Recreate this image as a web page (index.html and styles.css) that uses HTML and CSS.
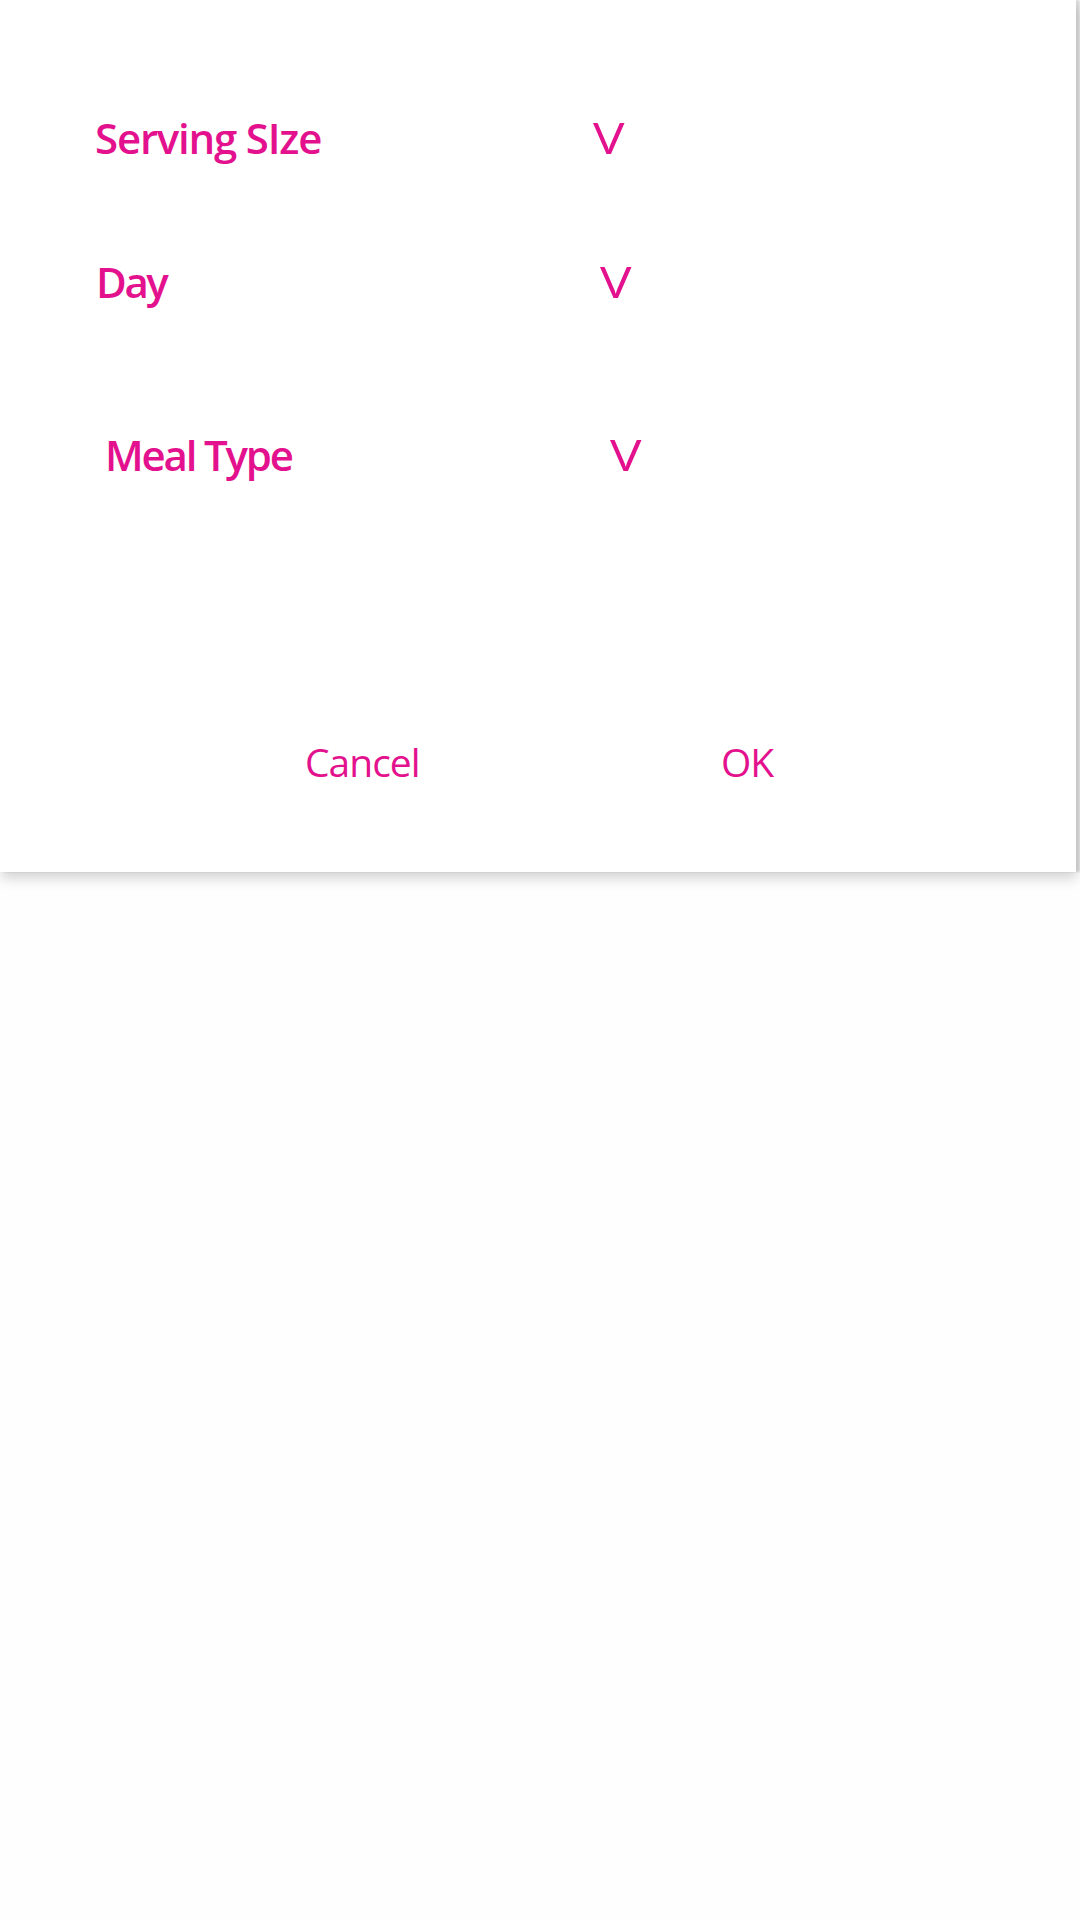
FILE: index.html
```html
<!DOCTYPE html>
<html lang="en">
<head>
<meta charset="utf-8">
<title>Add Meal</title>
<link rel="stylesheet" href="styles.css">
</head>
<body>
<div class="dialog">
  <div class="field field-serving">
    <span class="label">Serving SIze</span>
    <span class="chevron">V</span>
  </div>
  <div class="field field-day">
    <span class="label">Day</span>
    <span class="chevron">V</span>
  </div>
  <div class="field field-meal">
    <span class="label">Meal Type</span>
    <span class="chevron">V</span>
  </div>
  <div class="actions">
    <span class="btn btn-cancel">Cancel</span>
    <span class="btn btn-ok">OK</span>
  </div>
</div>
</body>
</html>
```
FILE: styles.css
```css
html, body {
  margin: 0;
  padding: 0;
  background: #fefefe;
}
body {
  width: 1080px;
  height: 1920px;
  font-family: "Open Sans", "Noto Sans", sans-serif;
  color: #e3118d;
}
.dialog {
  width: 1076px;
  height: 872px;
  box-sizing: border-box;
  background: #ffffff;
  padding-top: 107px;
  box-shadow: 1px 7px 12px rgba(0, 0, 0, 0.16), 4px 0 2px rgba(0, 0, 0, 0.14);
  display: flex;
  flex-direction: column;
}
.field {
  display: flex;
  align-items: baseline;
  height: 60px;
  line-height: 60px;
  font-size: 42px;
}
.label {
  font-weight: 600;
  letter-spacing: -1.2px;
  flex: none;
}
.chevron {
  font-weight: 400;
  font-size: 44px;
  display: inline-block;
  transform: scaleX(1.2);
  transform-origin: left bottom;
}
.field-serving {
  padding-left: 95px;
}
.field-serving .label { width: 498px; }
.field-day {
  margin-top: 84px;
  padding-left: 96px;
}
.field-day .label { width: 504px; letter-spacing: -2.4px; }
.field-meal {
  margin-top: 113px;
  padding-left: 105px;
}
.field-meal .label { width: 505px; letter-spacing: -2.2px; }
.actions {
  margin-top: 248px;
  display: flex;
  align-items: baseline;
  height: 60px;
  line-height: 60px;
  font-size: 39px;
  padding-left: 305px;
}
.btn {
  font-weight: 400;
  letter-spacing: -1px;
}
.btn-cancel { width: 416px; flex: none; }
```
